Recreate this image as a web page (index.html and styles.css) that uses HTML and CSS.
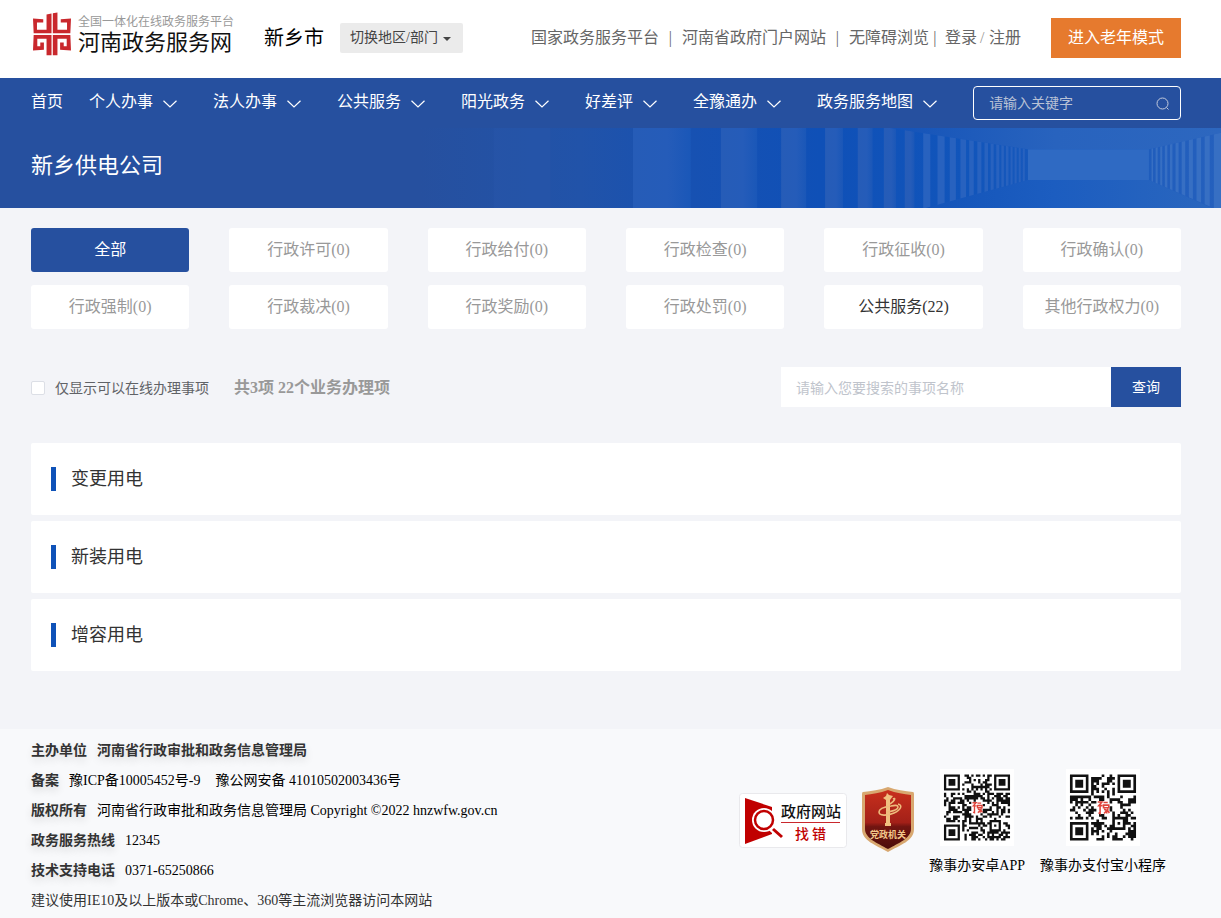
FILE: index.html
```html
<!DOCTYPE html>
<html lang="zh-CN">
<head>
<meta charset="utf-8">
<title>新乡供电公司 - 河南政务服务网</title>
<link rel="stylesheet" href="styles.css">
</head>
<body>
<svg class="defs" aria-hidden="true">
  <symbol id="chevron" viewBox="0 0 14 8"><path d="M.5 .8L7 7 13.500 .8" fill="none" stroke="currentColor" stroke-width="1.2"/></symbol>
</svg>

<header class="header wrap">
  <a class="logo" href="#">
    <svg class="logo-mark" viewBox="39 36 115 130" aria-hidden="true">
      <g fill="#c9282d">
        <path d="M39 54L70 56V66H51V88H80V42L95 39V99H41Z"/>
        <path d="M154 54L123 56V66H142V88H113V36L99 38V99H152Z"/>
        <path d="M41 104H95V165H80V115H52V138H61V127H72V149L39 151Z"/>
        <path d="M152 104H99V165H113V115H141V138H132V127H121V149L154 151Z"/>
      </g>
    </svg>
    <span class="logo-text">
      <span class="logo-sub">全国一体化在线政务服务平台</span>
      <span class="logo-name">河南政务服务网</span>
    </span>
  </a>
  <span class="city">新乡市</span>
  <button class="region" type="button">切换地区/部门<span class="caret"></span></button>
  <div class="links">
    <a href="#">国家政务服务平台</a><span class="sep">|</span><a href="#">河南省政府门户网站</a><span class="sep">|</span><a href="#">无障碍浏览</a><span class="sep tight">|</span><a href="#">登录</a><span class="slash">/</span><a href="#">注册</a>
  </div>
  <button class="elder" type="button">进入老年模式</button>
</header>

<nav class="nav wrap">
  <a class="home" href="#">首页</a>
  <a href="#">个人办事<svg><use href="#chevron"/></svg></a>
  <a href="#">法人办事<svg><use href="#chevron"/></svg></a>
  <a href="#">公共服务<svg><use href="#chevron"/></svg></a>
  <a href="#">阳光政务<svg><use href="#chevron"/></svg></a>
  <a href="#">好差评<svg><use href="#chevron"/></svg></a>
  <a href="#">全豫通办<svg><use href="#chevron"/></svg></a>
  <a href="#">政务服务地图<svg><use href="#chevron"/></svg></a>
  <form class="site-search">
    <input type="text" placeholder="请输入关键字" aria-label="关键字">
    <button type="button" aria-label="搜索"><svg viewBox="0 0 14 14"><circle cx="6.5" cy="6.5" r="5.500"/><path d="M10.500 10.500l2 2"/></svg></button>
  </form>
</nav>

<section class="banner wrap">
  <svg class="banner-art" viewBox="0 24 1568 240" preserveAspectRatio="none" aria-hidden="true">
    <defs>
      <linearGradient id="base"><stop offset="0" stop-color="#26509f"/><stop offset=".2" stop-color="#2153a9"/><stop offset=".34" stop-color="#1751b2"/><stop offset=".5" stop-color="#0f50b7"/><stop offset=".68" stop-color="#1155bb"/><stop offset="1" stop-color="#2560bd"/></linearGradient>
      <linearGradient id="bar"><stop offset="0" stop-color="#265cb7"/><stop offset=".6" stop-color="#255cb9"/><stop offset="1" stop-color="#1a57b8"/></linearGradient>
      <linearGradient id="ceil"><stop offset="0" stop-color="#1453b8"/><stop offset=".5" stop-color="#2863be"/><stop offset="1" stop-color="#2d67bf"/></linearGradient>
      <linearGradient id="floor"><stop offset="0" stop-color="#1354b9"/><stop offset=".45" stop-color="#1c5dc0"/><stop offset="1" stop-color="#2a66be"/></linearGradient>
      <clipPath id="walls"><path d="M0 24H920L1190 88V180L990 264H0ZM1427 88L1568 38V274L1427 180Z"/></clipPath>
    </defs>
    <rect y="24" width="1568" height="240" fill="url(#base)"/>
    <rect x="144" y="24" width="112" height="240" fill="#2755a9" opacity=".5"/>
    <path fill="url(#ceil)" d="M920 24H1568V38L1427 88H1190Z"/>
    <path fill="url(#floor)" d="M990 264L1190 180H1427L1550 264Z"/>
    <g clip-path="url(#walls)" fill="url(#bar)">
      <rect x="417" y="24" width="113" height="240"/><rect x="589" y="24" width="71" height="240"/><rect x="707" y="24" width="49" height="240"/><rect x="793" y="24" width="35" height="240"/><rect x="857" y="24" width="29" height="240"/><rect x="908" y="24" width="24" height="240"/><rect x="949" y="24" width="19" height="240"/>
      <g fill="#2862bf">
        <rect x="985" y="24" width="14" height="240"/><rect x="1013" y="24" width="14" height="240"/><rect x="1037" y="24" width="12" height="240"/><rect x="1058" y="24" width="11" height="240"/><rect x="1075" y="24" width="9" height="240"/><rect x="1091" y="24" width="8" height="240"/><rect x="1105" y="24" width="7" height="240"/><rect x="1117" y="24" width="6" height="240"/><rect x="1128" y="24" width="6" height="240"/><rect x="1138" y="24" width="5" height="240"/><rect x="1147" y="24" width="5" height="240"/><rect x="1156" y="24" width="4" height="240"/><rect x="1164" y="24" width="4" height="240"/><rect x="1172" y="24" width="4" height="240"/><rect x="1180" y="24" width="4" height="240"/>
      </g>
      <g fill="#376fc3">
        <rect x="1432" y="24" width="3" height="240"/><rect x="1440" y="24" width="4" height="240"/><rect x="1449" y="24" width="4" height="240"/><rect x="1458" y="24" width="5" height="240"/><rect x="1468" y="24" width="5" height="240"/><rect x="1479" y="24" width="6" height="240"/><rect x="1491" y="24" width="7" height="240"/><rect x="1505" y="24" width="8" height="240"/><rect x="1520" y="24" width="9" height="240"/><rect x="1536" y="24" width="10" height="240"/><rect x="1554" y="24" width="14" height="240"/>
      </g>
    </g>
    <rect x="1190" y="88" width="237" height="92" fill="#2f6ac3"/>
  </svg>
  <h1>新乡供电公司</h1>
</section>

<main class="wrap">
  <div class="filters">
    <button type="button" class="active">全部</button>
    <button type="button">行政许可(0)</button>
    <button type="button">行政给付(0)</button>
    <button type="button">行政检查(0)</button>
    <button type="button">行政征收(0)</button>
    <button type="button">行政确认(0)</button>
    <button type="button">行政强制(0)</button>
    <button type="button">行政裁决(0)</button>
    <button type="button">行政奖励(0)</button>
    <button type="button">行政处罚(0)</button>
    <button type="button" class="has-items">公共服务(22)</button>
    <button type="button">其他行政权力(0)</button>
  </div>

  <div class="toolbar">
    <label class="online"><input type="checkbox">仅显示可以在线办理事项</label>
    <strong class="total">共3项 22个业务办理项</strong>
    <form class="item-search">
      <input type="text" placeholder="请输入您要搜索的事项名称" aria-label="事项名称">
      <button type="button">查询</button>
    </form>
  </div>

  <ul class="items">
    <li><a href="#"><span>变更用电</span></a></li>
    <li><a href="#"><span>新装用电</span></a></li>
    <li><a href="#"><span>增容用电</span></a></li>
  </ul>
</main>

<footer class="footer wrap">
  <div class="info">
    <p><b>主办单位</b><b>河南省行政审批和政务信息管理局</b></p>
    <p><b>备案</b><a class="icp" href="#">豫ICP备10005452号-9</a><a href="#">豫公网安备 41010502003436号</a></p>
    <p><b>版权所有</b>河南省行政审批和政务信息管理局 Copyright ©2022 hnzwfw.gov.cn</p>
    <p><b>政务服务热线</b>12345</p>
    <p><b>技术支持电话</b>0371-65250866</p>
    <p class="advice">建议使用IE10及以上版本或Chrome、360等主流浏览器访问本网站</p>
  </div>
  <div class="badges">
    <a href="#" class="report" aria-label="政府网站找错">
      <svg viewBox="0 0 108 56">
        <rect x=".5" y=".5" width="107" height="54" rx="3" fill="#fff" stroke="#e9e9ec"/>
        <path d="M6 5L33 14V41L6 51Z" fill="#c00000"/>
        <circle cx="25" cy="27" r="12" fill="#fff"/>
        <circle cx="25" cy="27" r="9" fill="#fff" stroke="#c00000" stroke-width="2.500"/>
        <path d="M32 35l11 10" stroke="#fff" stroke-width="6"/>
        <path d="M34 36l9 8" stroke="#c00000" stroke-width="3"/>
        <rect x="42" y="29" width="59" height="1" fill="#c9282d"/>
        <text x="42" y="24" font-size="15" font-weight="500" fill="#111">政府网站</text>
        <text x="56" y="46" font-size="14" font-weight="500" fill="#c00000">找</text>
        <text x="73" y="46" font-size="14" font-weight="500" fill="#c00000">错</text>
      </svg>
    </a>
    <a href="#" class="shield" aria-label="党政机关">
      <svg viewBox="0 0 52 65">
        <defs><linearGradient id="red" x2="0" y2="1"><stop offset="0" stop-color="#c8301d"/><stop offset=".55" stop-color="#a32018"/><stop offset=".62" stop-color="#721511"/><stop offset="1" stop-color="#4b0d0a"/></linearGradient></defs>
        <path d="M26 0C34 3 43 4 51 5Q52 5 52 7V42C52 54 38 58 26 65C14 58 0 54 0 42V7Q0 5 1 5C9 4 18 3 26 0Z" fill="#d8a870"/>
        <path d="M26 3C34 6 42 7 49 8V42C49 51 37 56 26 62C15 56 3 51 3 42V8C10 7 18 6 26 3Z" fill="url(#red)"/>
        <path d="M25 6l2 2 4 1-3 4v23h1v3h-6v-3h1V13l-3-2 3-2z" fill="#f0c080"/>
        <path d="M31 12c3-2 2 2-3 5M36 17c5 1 3 6-4 9-7 3-15 3-15-1 0-3 5-5 12-6 4-1 7-1 7 1 0 3-8 5-12 5" fill="none" stroke="#eebb7c" stroke-width="1.600"/>
        <text x="26" y="51" font-size="9" font-weight="700" text-anchor="middle" fill="#f3c98c">党政机关</text>
      </svg>
    </a>
    <figure><svg class="qr" data-size="29" data-seed="11" role="img" aria-label="安卓APP二维码"></svg><figcaption>豫事办安卓APP</figcaption></figure>
    <figure><svg class="qr" data-size="25" data-seed="5" role="img" aria-label="支付宝小程序二维码"></svg><figcaption>豫事办支付宝小程序</figcaption></figure>
  </div>
</footer>
<script src="qr.js"></script>
</body>
</html>
```
FILE: styles.css
```css
* { box-sizing: border-box; }
body {
  margin: 0;
  background: #f3f4f8;
  color: #000;
  font-family: "Liberation Serif", "Noto Sans CJK SC", serif;
  font-size: 14px;
}
a { color: inherit; text-decoration: none; }
button, input { font: inherit; border: 0; margin: 0; }
button { cursor: pointer; }
.defs { display: none; }
.wrap { padding-left: 31px; padding-right: 40px; }

.header { display: flex; align-items: center; height: 78px; padding-bottom: 2px; background: #fff; }
.logo { display: flex; align-items: center; gap: 7px; padding-left: 2px; margin-top: -8px; }
.logo-mark { width: 38px; height: 44px; }
.logo-text { display: flex; flex-direction: column; white-space: nowrap; }
.logo-sub { font-size: 12px; line-height: 18px; color: #999; }
.logo-name { font-size: 22px; line-height: 24px; color: #111; }
.city { margin-left: 30px; padding-bottom: 4px; font-size: 20px; white-space: nowrap; }
.region {
  display: flex; align-items: center; gap: 5px;
  height: 30px; margin-left: 16px; padding: 0 12px 4px 10px;
  background: #ebebeb; border-radius: 2px; color: #444; white-space: nowrap;
}
.caret { border: 4px solid transparent; border-top-color: #444; border-bottom: 0; margin-top: 5px; }
.links { display: flex; margin-left: auto; font-size: 16px; line-height: 24px; color: #666; white-space: nowrap; }
.sep { width: 23px; text-align: center; }
.sep.tight { width: 16px; padding-right: 4px; }
.slash { width: 12px; padding-left: 3px; color: #999; }
.elder { height: 40px; width: 130px; margin-left: 30px; padding: 0 0 4px; background: #e67a2e; color: #fff; font-size: 16px; }

.nav { display: flex; align-items: center; height: 50px; background: #26509f; color: #fff; font-size: 16px; white-space: nowrap; }
.nav > a { display: flex; align-items: center; gap: 10px; margin-right: 36px; line-height: 24px; padding-bottom: 2px; }
.nav > .home { margin-right: 26px; }
.nav > a svg { width: 14px; height: 8px; margin-top: 3px; }
.site-search { display: flex; align-items: center; flex: 0 0 208px; min-width: 0; height: 34px; margin-left: auto; border: 1px solid #fff; border-radius: 4px; padding: 0 10px 0 15px; }
.site-search input { flex: 1; min-width: 0; padding: 2px 0 0; background: none; color: #fff; font-size: 14px; outline: 0; }
.site-search input::placeholder { color: #b9c2d6; }
.site-search button { padding: 2px 0 0; background: none; display: flex; }
.site-search svg { width: 14px; height: 14px; fill: none; stroke: #c4cbdc; }

.banner { position: relative; height: 80px; background: #26509f; color: #fff; }
.banner-art { position: absolute; right: 0; top: 0; width: 801px; height: 80px; }
.banner h1 { position: relative; margin: 0; font-size: 22px; font-weight: 400; line-height: 75px; }

.filters { display: grid; grid-template-columns: repeat(6, 1fr); gap: 13px 40px; padding-top: 20px; }
.filters button { height: 44px; padding: 0 0 4px; background: #fff; border-radius: 3px; color: #999; font-size: 16px; white-space: nowrap; }
.filters .active { background: #26509f; color: #fff; }
.filters .has-items { color: #333; }

.toolbar { display: flex; align-items: center; margin-top: 38px; }
.online { display: flex; align-items: center; gap: 10px; color: #606266; }
.online input { appearance: none; width: 14px; height: 14px; margin-top: 1px; background: #fff; border: 1px solid #dcdfe6; border-radius: 2px; }
.total { margin-left: 25px; padding-bottom: 2px; font-size: 16px; color: #999; }
.item-search { display: flex; flex: 0 0 400px; margin-left: auto; }
.item-search input { flex: 1; min-width: 0; height: 40px; padding: 3px 15px 0; background: #fff; }
.item-search input::placeholder { color: #c0c4cc; }
.item-search button { width: 70px; height: 40px; padding: 0 0 2px; background: #26509f; color: #fff; }

.items { display: flex; flex-direction: column; gap: 6px; list-style: none; margin: 36px 0 58px; padding: 0; }
.items a { display: flex; align-items: center; gap: 15px; height: 72px; padding-left: 20px; background: #fff; border-radius: 2px; color: #333; font-size: 18px; }
.items a::before { content: ""; width: 5px; height: 24px; background: #0f52b8; }
.items span { padding-bottom: 4px; }

.footer { display: flex; justify-content: space-between; background: #f8f9fb; padding-top: 7px; padding-bottom: 2px; }
.info p { margin: 0; line-height: 30px; }
.info b { margin-right: 10px; color: #333; text-shadow: 0 4px 8px rgba(0, 0, 0, .12); }
.info .icp { margin-right: 15px; }
.info .advice { color: #333; }
.badges { display: flex; align-items: flex-start; gap: 15px; padding: 33px 15px 0 0; white-space: nowrap; }
.badges svg { display: block; font-family: "Noto Sans CJK SC", sans-serif; }
.report { margin-top: 24px; }
.report svg { width: 108px; height: 56px; }
.shield { margin-top: 18px; }
.shield svg { width: 52px; height: 65px; }
figure { display: flex; flex-direction: column; align-items: center; margin: 0; }
.qr { width: 74px; height: 77px; background: #fff; }
figcaption { line-height: 20px; margin-top: 10px; }
```
FILE: qr.js
```js
// Draws a QR-style matrix: three finder squares, timing lines, data cells and a red centre mark.
document.querySelectorAll(".qr").forEach(function (svg) {
  var n = Number(svg.dataset.size);
  var state = Number(svg.dataset.seed);
  var mid = (n - 1) / 2;
  var pad = n * 0.06;
  var path = "";

  function next() {
    state = (state * 1103515245 + 12345) % 2147483648;
    return state / 2147483648;
  }
  function finder(x, y) {
    var d = Math.max(Math.abs(x - 3), Math.abs(y - 3));
    return d === 3 || d < 2;
  }
  for (var y = 0; y < n; y++) {
    for (var x = 0; x < n; x++) {
      var left = x < 8, right = x > n - 9, top = y < 8, bottom = y > n - 9;
      var on = next() > 0.48;
      if (left && top) on = x < 7 && y < 7 && finder(x, y);
      else if (right && top) on = x > n - 8 && y < 7 && finder(x - n + 7, y);
      else if (left && bottom) on = x < 7 && y > n - 8 && finder(x, y - n + 7);
      else if (Math.abs(x - n + 7) < 3 && Math.abs(y - n + 7) < 3) {
        var d = Math.max(Math.abs(x - n + 7), Math.abs(y - n + 7));
        on = d !== 1;
      } else if (x === 6 || y === 6) on = (x + y) % 2 === 0;
      if (Math.abs(x - mid) < 3 && Math.abs(y - mid) < 3) on = false;
      if (on) path += "M" + x + " " + y + "h1v1h-1z";
    }
  }
  svg.setAttribute("viewBox", [-pad, -pad, n + 2 * pad, n + 2 * pad].join(" "));
  svg.innerHTML = '<path fill="#111" d="' + path + '"/>' +
    '<g transform="translate(' + (mid - 1.5) + " " + (mid - 2) + ')" fill="none" stroke="#e0453c" stroke-width=".6">' +
    '<path d="M0 .4h1.6L.4 1.8h1.400M.9 1.800v3l-.6-.3M2.200.6h1.600M2.200 1.600h2v1h-2zM2.400 3.200l1 .4v1.200M4 3l-1.600 1.800M3.600 3.400l.8 1.200"/></g>';
});
```
